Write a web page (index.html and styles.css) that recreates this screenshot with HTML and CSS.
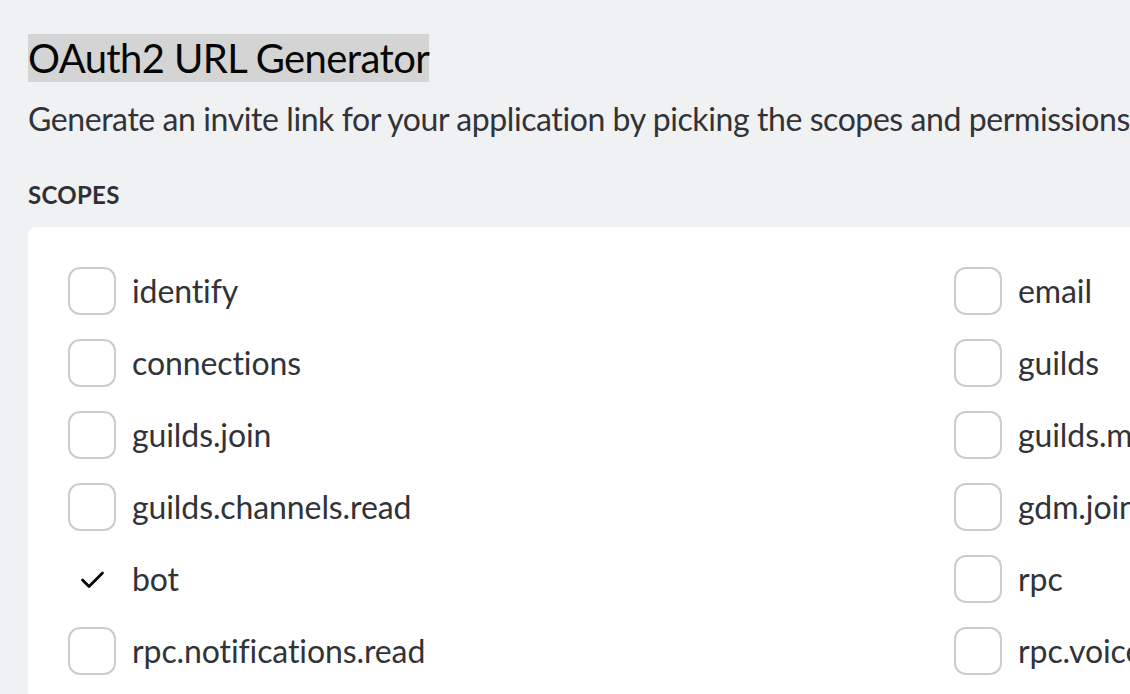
FILE: index.html
```html
<!DOCTYPE html>
<html>
<head>
<meta charset="utf-8">
<title>OAuth2 URL Generator</title>
<link rel="stylesheet" href="styles.css">
</head>
<body>
<main class="page">
  <h1 class="title">OAuth2 URL Generator</h1>
  <p class="desc">Generate an invite link for your application by picking the scopes and permissions it needs to function. Then, share the URL to others!</p>
  <h2 class="section">Scopes</h2>
  <div class="card">
    <div class="grid">
      <label class="item"><span class="box"></span><span class="label">identify</span></label>
      <label class="item"><span class="box"></span><span class="label">email</span></label>
      <label class="item"><span class="box"></span><span class="label">connections</span></label>
      <label class="item"><span class="box"></span><span class="label">guilds</span></label>
      <label class="item"><span class="box"></span><span class="label">guilds.join</span></label>
      <label class="item"><span class="box"></span><span class="label">guilds.members.read</span></label>
      <label class="item"><span class="box"></span><span class="label">guilds.channels.read</span></label>
      <label class="item"><span class="box"></span><span class="label">gdm.join</span></label>
      <label class="item"><span class="box checked"><svg width="48" height="48" viewBox="0 0 48 48"><path d="M14.5 25 L21 31.5 L34.5 18" fill="none" stroke="#060607" stroke-width="2.8" stroke-linecap="round" stroke-linejoin="round"/></svg></span><span class="label">bot</span></label>
      <label class="item"><span class="box"></span><span class="label">rpc</span></label>
      <label class="item"><span class="box"></span><span class="label">rpc.notifications.read</span></label>
      <label class="item"><span class="box"></span><span class="label">rpc.voice.read</span></label>
      <label class="item"><span class="box"></span><span class="label">rpc.voice.write</span></label>
      <label class="item"><span class="box"></span><span class="label">rpc.activities.write</span></label>
    </div>
  </div>
</main>
</body>
</html>
```
FILE: styles.css
```css
html, body {
  margin: 0;
  padding: 0;
  overflow: hidden;
  height: 100%;
}
body {
  background: #f0f1f3;
  font-family: Lato, "Noto Sans", sans-serif;
  color: #313338;
}
.page {
  padding: 34px 0 0 28px;
  white-space: nowrap;
}
.title {
  display: inline-block;
  margin: 0;
  font-size: 40px;
  line-height: 48px;
  font-weight: 400;
  color: #060607;
  background: #d4d4d4;
  letter-spacing: -0.6px;
}
.desc {
  margin: 17px 0 0;
  font-size: 32px;
  line-height: 40px;
  letter-spacing: -0.42px;
  color: #313338;
}
.section {
  margin: 40px 0 0;
  font-size: 24px;
  line-height: 32px;
  font-weight: 700;
  text-transform: uppercase;
  color: #2e3035;
  letter-spacing: 0.3px;
}
.card {
  margin-top: 16px;
  background: #ffffff;
  border-radius: 8px;
  padding: 40px;
  width: max-content;
}
.grid {
  display: grid;
  grid-template-columns: 870px 870px;
  column-gap: 16px;
  row-gap: 24px;
}
.item {
  display: flex;
  align-items: center;
  gap: 16px;
  height: 48px;
}
.box {
  box-sizing: border-box;
  width: 48px;
  height: 48px;
  flex: 0 0 48px;
  border: 2px solid #c9cdd2;
  border-radius: 12px;
}
.box.checked {
  border: none;
}
.box svg {
  display: block;
}
.label {
  font-size: 32px;
  line-height: 40px;
  color: #313338;
  letter-spacing: -0.1px;
}
```
